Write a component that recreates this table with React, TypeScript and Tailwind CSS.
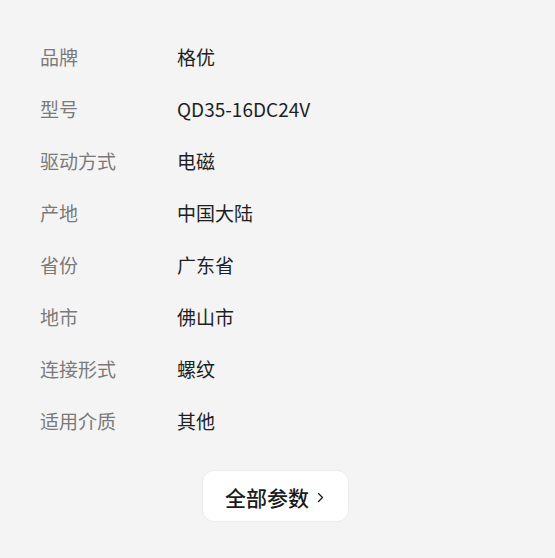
const params: [string, string][] = [
  ['品牌', '格优'],
  ['型号', 'QD35-16DC24V'],
  ['驱动方式', '电磁'],
  ['产地', '中国大陆'],
  ['省份', '广东省'],
  ['地市', '佛山市'],
  ['连接形式', '螺纹'],
  ['适用介质', '其他'],
];

export default function App() {
  return (
    <div
      className="min-h-[558px] w-full bg-[#f4f4f4] pt-[31px]"
      style={{ fontFamily: '"Noto Sans CJK SC", "Noto Sans", sans-serif' }}
    >
      <div className="pl-[40px]">
        {params.map(([label, value]) => (
          <div key={label} className="flex h-[52px] items-center text-[19px]">
            <span className="w-[137px] shrink-0 text-[#7a7a7a]">{label}</span>
            <span className="text-[#1f1f1f]">{value}</span>
          </div>
        ))}
      </div>

      <div className="mt-[23px] flex justify-center pr-[4px]">
        <button className="flex h-[52px] w-[147px] items-center justify-center gap-[8px] rounded-[12px] border border-[#ebebeb] bg-white pt-[3px] pr-[2px] text-[21px] font-medium text-[#1a1a1a]">
          全部参数
          <svg width="7" height="11" viewBox="0 0 7 11" fill="none" className="mt-[-1px]">
            <path d="M1.5 1.5l4 4-4 4" stroke="#1a1a1a" strokeWidth="1.3" strokeLinecap="round" strokeLinejoin="round" />
          </svg>
        </button>
      </div>
    </div>
  );
}
